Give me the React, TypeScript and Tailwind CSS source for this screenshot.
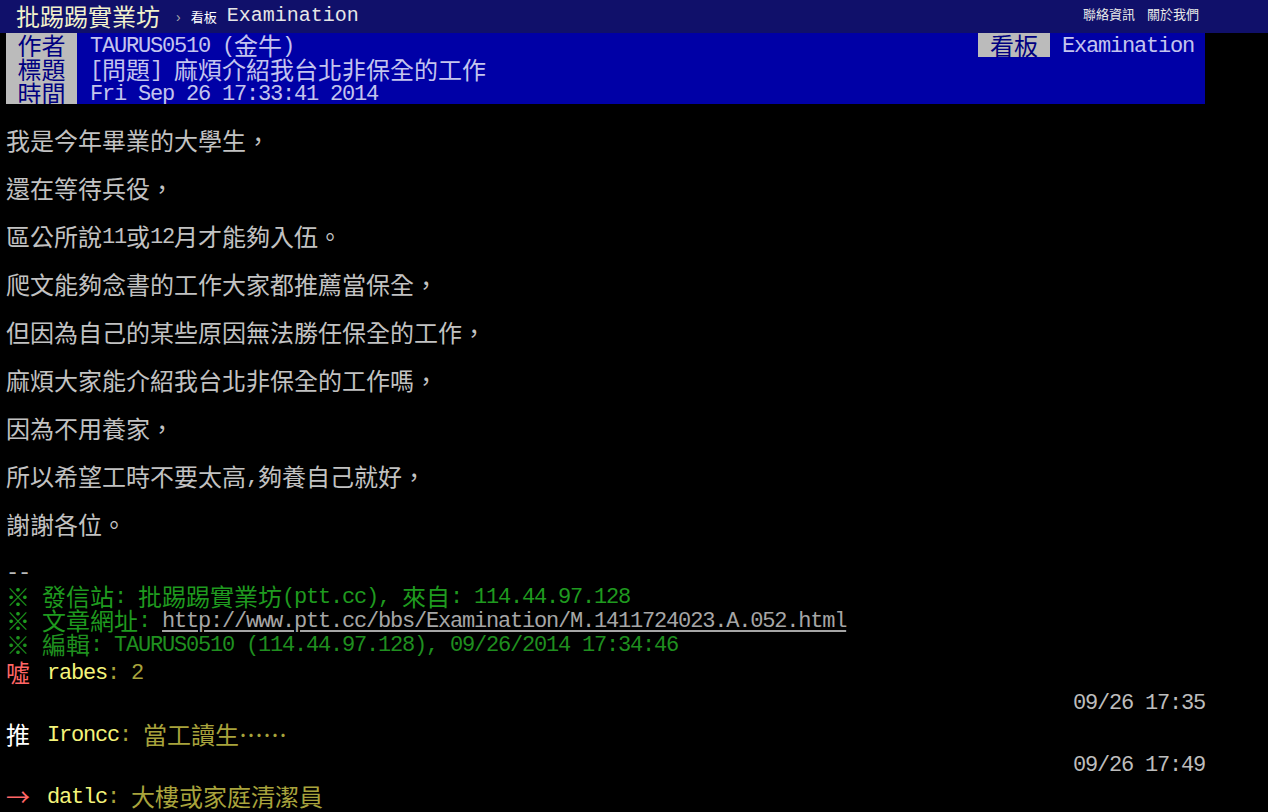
import { Fragment } from "react";

// splits a line into ascii runs (half width) and cjk runs (full width),
// each run is a 24px tall box so mixed lines keep one fixed height
function T({ s, u = false }: { s: string; u?: boolean }) {
  const parts = s.split(/([\x20-\x7e]+)/);
  return (
    <>
      {parts.map((p, i) => {
        if (p === "") return null;
        if (/^[\x20-\x7e]+$/.test(p)) {
          return (
            <span
              key={i}
              className={
                u
                  ? "inline-block h-[24px] align-top font-['Liberation_Mono',monospace] text-[22px] leading-[28px] tracking-[-1.2px] underline underline-offset-[3px]"
                  : "inline-block h-[24px] align-top font-['Liberation_Mono',monospace] text-[22px] leading-[28px] tracking-[-1.2px]"
              }
            >
              {p}
            </span>
          );
        }
        return (
          <span
            key={i}
            className="inline-block h-[24px] align-top font-['Noto_Sans_CJK_TC','Noto_Sans_CJK_SC',sans-serif] text-[24px] leading-[24px]"
          >
            {p}
          </span>
        );
      })}
    </>
  );
}

const bodyLines = [
  "我是今年畢業的大學生，",
  "還在等待兵役，",
  "區公所說11或12月才能夠入伍。",
  "爬文能夠念書的工作大家都推薦當保全，",
  "但因為自己的某些原因無法勝任保全的工作，",
  "麻煩大家能介紹我台北非保全的工作嗎，",
  "因為不用養家，",
  "所以希望工時不要太高,夠養自己就好，",
  "謝謝各位。",
];

const pushes = [
  { tag: "噓 ", tagColor: "text-[#ff6666]", user: "rabes", content: ": 2", time: "09/26 17:35" },
  { tag: "推 ", tagColor: "text-white", user: "Ironcc", content: ": 當工讀生……", time: "09/26 17:49" },
  { tag: "→ ", tagColor: "text-[#ff6666]", user: "datlc", content: ": 大樓或家庭清潔員", time: "" },
];

function MetaRow({ tag, value }: { tag: string; value: string }) {
  return (
    <div className="flex h-[24px]">
      <span className="w-[71px] h-[24px] bg-[#bbbbbb] text-[#000080] text-center">
        <T s={tag} />
      </span>
      <span className="ml-[13px] h-[24px] text-[#c4c4ee]">
        <T s={value} />
      </span>
    </div>
  );
}

export default function App() {
  return (
    <div className="min-h-[812px] w-[1268px] bg-black whitespace-pre overflow-hidden font-['Noto_Sans_CJK_TC','Noto_Sans_CJK_SC',sans-serif] text-[24px] leading-[24px]">
      {/* top bar */}
      <div className="flex h-[33px] items-center bg-[#10106a] pl-[16px] pr-[69px]">
        <span className="text-[#f2f2cc] -mt-[2px]">批踢踢實業坊</span>
        <span className="ml-[16px] text-[14px] text-[#aaaaaa] font-['Liberation_Sans',sans-serif]">›</span>
        <span className="ml-[10px] text-[13px] text-white">看板</span>
        <span className="ml-[10px] text-[#e6e6e6] -mt-[2px] font-['Liberation_Mono',monospace] text-[20px]">
          Examination
        </span>
        <div className="ml-auto flex gap-[12px] text-[13px] leading-[16px] text-[#e8e8e8] -mt-[6px]">
          <span>聯絡資訊</span>
          <span>關於我們</span>
        </div>
      </div>

      <div className="w-[1205px] pl-[6px]">
        {/* meta header */}
        <div className="bg-[#0000a6] h-[71px] overflow-hidden">
          <div className="flex h-[24px]">
            <div className="flex-1">
              <MetaRow tag="作者" value="TAURUS0510 (金牛)" />
            </div>
            <span className="w-[72px] h-[24px] bg-[#bbbbbb] text-[#000080] text-center">
              <T s="看板" />
            </span>
            <span className="ml-[12px] mr-[11px] text-[#c4c4ee]">
              <T s="Examination" />
            </span>
          </div>
          <MetaRow tag="標題" value="[問題] 麻煩介紹我台北非保全的工作" />
          <MetaRow tag="時間" value="Fri Sep 26 17:33:41 2014" />
        </div>

        {/* article body */}
        <div className="text-[#c2c2c2]">
          <div className="h-[24px]" />
          {bodyLines.map((line, i) => (
            <Fragment key={i}>
              <div className="h-[24px]">
                <T s={line} />
              </div>
              <div className="h-[24px]" />
            </Fragment>
          ))}
          <div className="h-[24px] text-[#bbbbbb]">
            <T s="--" />
          </div>
          <div className="h-[24px] text-[#1f9a1f]">
            <T s="※ 發信站: 批踢踢實業坊(ptt.cc), 來自: 114.44.97.128" />
          </div>
          <div className="h-[24px] text-[#1f9a1f]">
            <T s="※ 文章網址: " />
            <a href="#" className="text-[#a6a6a6]">
              <T s="http://www.ptt.cc/bbs/Examination/M.1411724023.A.052.html" u />
            </a>
          </div>
          <div className="h-[24px] text-[#1f8f1f]">
            <T s="※ 編輯: TAURUS0510 (114.44.97.128), 09/26/2014 17:34:46" />
          </div>

          {/* pushes */}
          {pushes.map((p) => (
            <div key={p.user}>
              <div className="h-[31px] pt-[4px]">
                <span className={p.tagColor}>
                  <T s={p.tag} />
                </span>
                <span className="ml-[5px] text-[#f4f47a]">
                  <T s={p.user} />
                </span>
                <span className="text-[#a8a33c]">
                  <T s={p.content} />
                </span>
              </div>
              <div className="h-[31px] pt-[3px] text-right text-[#bdbdbd]">
                <T s={p.time} />
              </div>
            </div>
          ))}
        </div>
      </div>
    </div>
  );
}
